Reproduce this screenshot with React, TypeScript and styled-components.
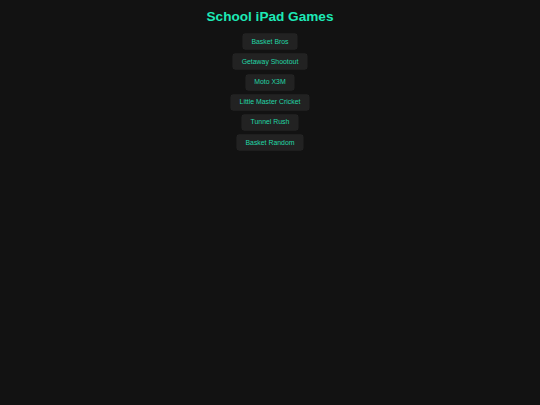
import React from "react";
import styled, { createGlobalStyle } from "styled-components";

const GlobalStyle = createGlobalStyle`
  html, body {
    margin: 0;
    padding: 0;
    background: #121212;
  }
  body {
    font-family: "Liberation Sans", Arial, sans-serif;
    min-height: 405px;
  }
`;

const Styles = {
  Page: styled.main`
    display: flex;
    flex-direction: column;
    align-items: center;
    padding-top: 8.5px;
  `,
  Title: styled.h1`
    margin: 0 0 10px;
    font-size: 13.6px;
    font-weight: bold;
    line-height: 1.15;
    color: #1de9b6;
  `,
  List: styled.nav`
    display: flex;
    flex-direction: column;
    align-items: center;
    gap: 5.2px;
  `,
  GameButton: styled.button`
    font-family: "Liberation Sans", Arial, sans-serif;
    font-size: 6.9px;
    line-height: 1.15;
    height: 15px;
    padding: 0 8.5px;
    background: #222222;
    color: #22d6a6;
    border: 0;
    border-radius: 2px;
    box-shadow: 0 0 0 0.4px #2a2a2a;
    cursor: pointer;
  `
};

const games = [
  "Basket Bros",
  "Getaway Shootout",
  "Moto X3M",
  "Little Master Cricket",
  "Tunnel Rush",
  "Basket Random"
];

const App = () => {
  return (
    <>
      <GlobalStyle />
      <Styles.Page>
        <Styles.Title>School iPad Games</Styles.Title>
        <Styles.List>
          {games.map((name) => (
            <Styles.GameButton key={name}>{name}</Styles.GameButton>
          ))}
        </Styles.List>
      </Styles.Page>
    </>
  );
};

export default App;
